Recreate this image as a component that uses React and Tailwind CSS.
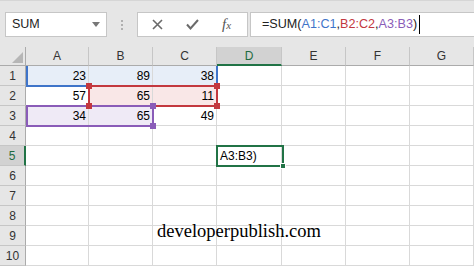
import React from 'react'

const cols = ['A', 'B', 'C', 'D', 'E', 'F', 'G']
const widths = ['w-[63px]', 'w-[64px]', 'w-[64px]', 'w-[65px]', 'w-[64px]', 'w-[64px]', 'w-[64px]']

const data = {
  1: ['23', '89', '38'],
  2: ['57', '65', '11'],
  3: ['34', '65', '49'],
}

// cell fills for the referenced ranges
const fillFor = (r, c) => {
  if (r === 1 && c <= 2) return 'bg-[#e7eef8]'
  if (r === 2 && (c === 1 || c === 2)) return 'bg-[#f9e7e7]'
  if (r === 3 && c <= 1) return 'bg-[#efeaf6]'
  return 'bg-white'
}

const Handle = ({ x, y, color }) => (
  <div className={`absolute w-[6px] h-[6px] ${color}`} style={{ left: x - 3, top: y - 3 }} />
)

const NameBox = () => (
  <div className="w-[102px] h-[25px] bg-white border border-[#c6c6c6] flex items-center justify-between pl-[6px] pr-[6px]">
    <span className="text-[12.5px] text-[#222]">SUM</span>
    <svg width="8" height="5" viewBox="0 0 8 5"><path d="M0 0h8L4 5z" fill="#777" /></svg>
  </div>
)

const FormulaBar = () => (
  <div className="flex pt-[11px] pl-[5px] h-[47px] bg-[#e6e6e6] border-t border-[#d6d6d6]">
    <NameBox />
    <div className="w-[30px] flex flex-col items-center justify-center gap-[2px] h-[25px]">
      <div className="w-[2px] h-[2px] bg-[#b0b0b0]" />
      <div className="w-[2px] h-[2px] bg-[#b0b0b0]" />
      <div className="w-[2px] h-[2px] bg-[#b0b0b0]" />
    </div>
    <div className="w-[111px] h-[25px] bg-white border border-[#c6c6c6] flex items-center text-[#666]">
      <svg className="ml-[14px]" width="11" height="11" viewBox="0 0 11 11">
        <path d="M1 1L10 10M10 1L1 10" stroke="#6a6a6a" strokeWidth="1.6" />
      </svg>
      <svg className="ml-[23px]" width="13" height="11" viewBox="0 0 13 11">
        <path d="M1 5.5L4.5 9.5L12 1" stroke="#6a6a6a" strokeWidth="2" fill="none" />
      </svg>
      <span className="ml-[23px] italic text-[15px] leading-none font-['Liberation_Serif',serif] text-[#555]">
        f<span className="text-[11px]">x</span>
      </span>
    </div>
    <div className="ml-[2px] flex-1 h-[25px] bg-white border border-r-0 border-[#c6c6c6] flex items-center pl-[11px] text-[12.6px] text-[#222]">
      <span>=SUM(</span>
      <span className="text-[#3f74c9]">A1:C1</span>
      <span>,</span>
      <span className="text-[#c3383f]">B2:C2</span>
      <span>,</span>
      <span className="text-[#8a5cb8]">A3:B3</span>
      <span>)</span>
      <div className="w-px h-[19px] bg-black ml-[2px]" />
    </div>
  </div>
)

const HeaderRow = () => (
  <div className="flex h-[19px]">
    <div className="w-[26px] bg-[#e6e6e6] border-r border-b border-[#ababab] relative">
      <svg className="absolute right-[2px] bottom-[2px]" width="11" height="11" viewBox="0 0 11 11">
        <path d="M11 0V11H0z" fill="#b6b6b6" />
      </svg>
    </div>
    {cols.map((c, i) => (
      <div
        key={c}
        className={`${widths[i]} flex items-center justify-center text-[12px] border-r ${
          c === 'D'
            ? 'bg-[#d2d2d2] text-[#1e6b41] border-b-2 border-b-[#217346] border-r-[#c6c6c6]'
            : 'bg-[#e6e6e6] text-[#333] border-b border-[#ababab] border-r-[#c6c6c6]'
        }`}
      >
        {c}
      </div>
    ))}
  </div>
)

const Row = ({ r }) => (
  <div className="flex h-[20px]">
    <div
      className={`w-[26px] flex items-center justify-center text-[12px] border-b border-[#c6c6c6] ${
        r === 5
          ? 'bg-[#d2d2d2] text-[#1e6b41] border-r-2 border-r-[#217346]'
          : 'bg-[#e6e6e6] text-[#333] border-r border-r-[#ababab]'
      }`}
    >
      {r}
    </div>
    {cols.map((c, i) => (
      <div
        key={c}
        className={`${widths[i]} ${fillFor(r, i)} border-r border-b border-[#d9d9d9] flex items-end justify-end pr-[2px] pb-[3px] text-[12px] text-black leading-none`}
      >
        {data[r] && i < 3 ? data[r][i] : ''}
      </div>
    ))}
  </div>
)

export default function App() {
  return (
    <div className="relative w-[474px] h-[266px] overflow-hidden bg-white font-['Liberation_Sans',Arial,sans-serif]">
      <FormulaBar />
      <HeaderRow />
      {[1, 2, 3, 4, 5, 6, 7, 8, 9, 10].map((r) => (
        <Row key={r} r={r} />
      ))}

      {/* blue range A1:C1 */}
      <div className="absolute left-[26px] top-[66px] w-[192px] h-[21px] border-l-2 border-r-2 border-b-2 border-[#3f74c9]" />
      {/* red range B2:C2 */}
      <div className="absolute left-[88px] top-[85px] w-[130px] h-[22px] border-2 border-[#c3383f]" />
      {/* purple range A3:B3 */}
      <div className="absolute left-[26px] top-[105px] w-[128px] h-[22px] border-2 border-[#8a5cb8]" />
      <Handle x={89} y={86} color="bg-[#c3383f]" />
      <Handle x={217} y={86} color="bg-[#c3383f]" />
      <Handle x={89} y={106} color="bg-[#c3383f]" />
      <Handle x={217} y={106} color="bg-[#c3383f]" />
      <Handle x={153} y={106} color="bg-[#8a5cb8]" />
      <Handle x={153} y={126} color="bg-[#8a5cb8]" />

      {/* active cell D5 */}
      <div className="absolute left-[216px] top-[145px] w-[68px] h-[22px] border-2 border-[#217346] flex items-center pl-[2px] text-[12px] text-black">
        A3:B3)
      </div>
      <div className="absolute left-[280px] top-[163px] w-[6px] h-[6px] bg-[#217346] border border-white" />

      <div className="absolute left-[157px] top-[222px] text-[18.5px] text-black font-['Liberation_Serif',serif] leading-none">
        developerpublish.com
      </div>
    </div>
  )
}
